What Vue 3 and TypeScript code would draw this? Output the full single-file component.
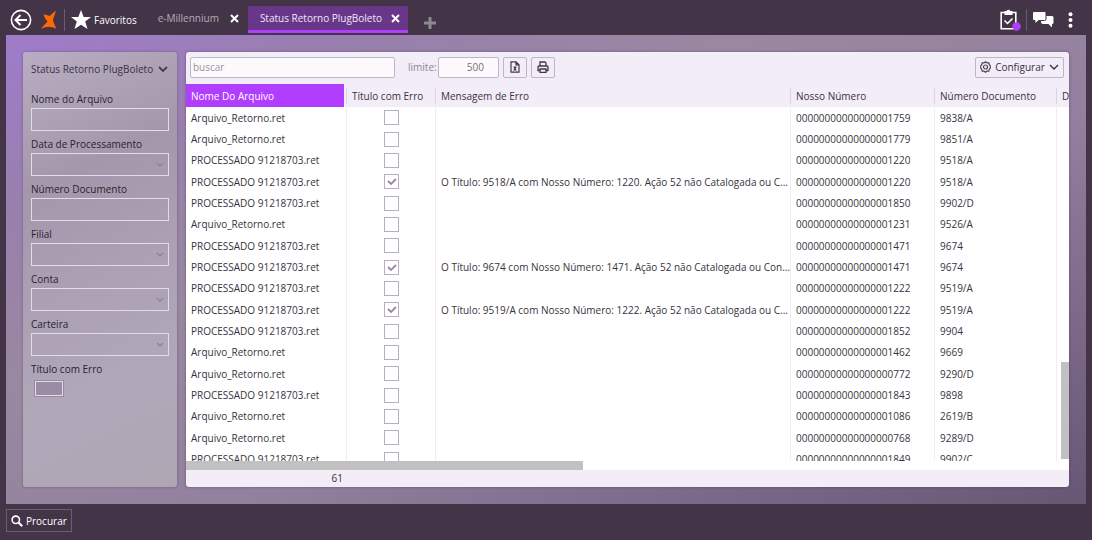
<script setup lang="ts">
import { ref } from 'vue'

interface Field { id: string; label: string; kind: 'text' | 'select' }
interface Row { file: string; error: boolean; message: string; ours: string; doc: string }

const fields: Field[] = [
  { id: 'arquivo', label: 'Nome do Arquivo', kind: 'text' },
  { id: 'data', label: 'Data de Processamento', kind: 'select' },
  { id: 'documento', label: 'Número Documento', kind: 'text' },
  { id: 'filial', label: 'Filial', kind: 'select' },
  { id: 'conta', label: 'Conta', kind: 'select' },
  { id: 'carteira', label: 'Carteira', kind: 'select' },
]

const A = 'Arquivo_Retorno.ret'
const P = 'PROCESSADO 91218703.ret'
const source: [string, string, string, string?][] = [
  [A, '1759', '9838/A'],
  [A, '1779', '9851/A'],
  [P, '1220', '9518/A'],
  [P, '1220', '9518/A', 'O Título: 9518/A com Nosso Número: 1220. Ação 52 não Catalogada ou C...'],
  [P, '1850', '9902/D'],
  [A, '1231', '9526/A'],
  [P, '1471', '9674'],
  [P, '1471', '9674', 'O Título: 9674 com Nosso Número: 1471. Ação 52 não Catalogada ou Con...'],
  [P, '1222', '9519/A'],
  [P, '1222', '9519/A', 'O Título: 9519/A com Nosso Número: 1222. Ação 52 não Catalogada ou C...'],
  [P, '1852', '9904'],
  [A, '1462', '9669'],
  [A, '0772', '9290/D'],
  [P, '1843', '9898'],
  [A, '1086', '2619/B'],
  [A, '0768', '9289/D'],
  [P, '1849', '9902/C'],
]
const rows = ref<Row[]>(source.map(([file, n, doc, message]) => ({
  file, doc, message: message ?? '', error: !!message, ours: n.padStart(20, '0'),
})))
const search = ref('')
const limit = ref('500')
</script>

<template>
  <div class="app">
    <header class="topbar">
      <button class="icon-btn back" aria-label="Voltar">
        <svg width="22" height="22" viewBox="0 0 22 22" fill="none" stroke="#fff">
          <circle cx="11" cy="11" r="9.6" stroke-width="1.6" />
          <path d="M17 11H6M10.5 6 5.5 11l5 5" stroke-width="2" />
        </svg>
      </button>
      <svg class="brand" width="18" height="20" viewBox="0 0 18 20" fill="#ff6a00">
        <path d="M3.500 4.500Q7 4.500 9.500 6L16 .5 12.800 10.500 16.300 18.800Q12.500 16.800 9 16.800T.8 18.800L7.500 11.500Q4.500 8.500 3.500 4.500Z" />
      </svg>
      <button class="favorites">
        <svg width="20" height="20" viewBox="0 0 20 20" fill="#fff">
          <path d="m10 0 2.700 7H20l-5.800 4.500L16.500 19 10 14.700 3.500 19l2.300-7.500L0 7h7.300Z" />
        </svg>
        <span>Favoritos</span>
      </button>
      <nav class="tabs">
        <div class="tab">
          <a href="#millennium">e-Millennium</a>
          <button class="icon-btn" aria-label="Fechar e-Millennium">
            <svg width="9" height="9" viewBox="0 0 9 9" stroke="#fff" stroke-width="2"><path d="m1 1 7 7M8 1 1 8" /></svg>
          </button>
        </div>
        <div class="tab active">
          <a href="#status">Status Retorno PlugBoleto</a>
          <button class="icon-btn" aria-label="Fechar Status Retorno PlugBoleto">
            <svg width="9" height="9" viewBox="0 0 9 9" stroke="#fff" stroke-width="2"><path d="m1 1 7 7M8 1 1 8" /></svg>
          </button>
        </div>
        <button class="icon-btn add" aria-label="Nova aba">
          <svg width="12" height="12" viewBox="0 0 12 12" stroke="#8d8990" stroke-width="3"><path d="M6 0v12M0 6h12" /></svg>
        </button>
      </nav>
      <div class="actions">
        <button class="icon-btn" aria-label="Tarefas">
          <svg width="21" height="22" viewBox="0 0 21 22" fill="none">
            <path d="M1.200 3.500h14.600v16.300H1.200z" stroke="#fff" stroke-width="1.600" />
            <path d="M4.500 2h2.200a1.900 1.900 0 0 1 3.600 0h2.200v4h-8z" fill="#fff" />
            <path d="m4.500 11.500 3 3 5-5" stroke="#fff" stroke-width="1.500" />
            <circle cx="16.500" cy="17.500" r="4.200" fill="#b13dff" />
          </svg>
        </button>
        <button class="icon-btn chat" aria-label="Mensagens">
          <svg width="22" height="17" viewBox="0 0 22 17">
            <path d="M9 5h11q1.500 0 1.500 1.500v5Q21.500 13 20 13v3.500L16.500 13H11q-2 0-2-2Z" fill="#fff" />
            <path d="M2 .5h10.500Q14 .5 14 2v6q0 1.500-1.500 1.500h-6L3 13V9.500H2Q.5 9.500.5 8V2Q.5.500 2 .5Z" fill="#fff" stroke="#433547" />
          </svg>
        </button>
        <button class="icon-btn more" aria-label="Mais opções">
          <svg width="5" height="16" viewBox="0 0 5 16" fill="#fff"><circle cx="2.500" cy="2.200" r="2" /><circle cx="2.500" cy="8" r="2" /><circle cx="2.500" cy="13.800" r="2" /></svg>
        </button>
      </div>
    </header>

    <main class="workspace">
      <aside class="filters">
        <button class="filters-title">
          <span>Status Retorno PlugBoleto</span>
          <svg width="10" height="7" viewBox="0 0 10 7" fill="none" stroke="#443c48" stroke-width="1.800"><path d="m1 1 4 4 4-4" /></svg>
        </button>
        <div v-for="f in fields" :key="f.id" class="field">
          <label :for="f.id">{{ f.label }}</label>
          <input v-if="f.kind === 'text'" :id="f.id" type="text" class="box" />
          <div v-else class="select-wrap">
            <select :id="f.id" class="box"><option></option></select>
            <svg class="caret" width="8" height="6" viewBox="0 0 8 6" fill="none" stroke="#8e8792" stroke-width="1.500"><path d="m1 1 3 3 3-3" /></svg>
          </div>
        </div>
        <div class="field">
          <label for="erro">Título com Erro</label>
          <input id="erro" type="checkbox" class="toggle" />
        </div>
      </aside>

      <section class="panel">
        <div class="toolbar">
          <input v-model="search" class="search" type="text" placeholder="buscar" aria-label="buscar" />
          <label class="limit-label" for="limite">limite:</label>
          <input id="limite" v-model="limit" class="limit" type="text" />
          <button class="tool" aria-label="Exportar">
            <svg width="10" height="12" viewBox="0 0 10 12" fill="none" stroke="#40384a" stroke-width="1.200"><path d="M1 .8h5L9 3.800v7.400H1zM6 .8v3h3" /><path d="m3.800 5.500 2.400 4m0-4-2.400 4" stroke-width="1.300" /></svg>
          </button>
          <button class="tool" aria-label="Imprimir">
            <svg width="12" height="12" viewBox="0 0 12 12" fill="none" stroke="#40384a" stroke-width="1.300"><path d="M3 5V1h5l1 1v3M2.500 9.500H1V6q0-1 1-1h8q1 0 1 1v3.500H9.500M3 8h6v3.300H3z" /></svg>
          </button>
          <button class="configure">
            <svg width="11" height="12" viewBox="0 0 11 12" fill="none" stroke="#4d4554"><path d="m5.500.8 1.500 1 1.800.1.500 1.800 1 1.300v2l-1 1.300-.5 1.800-1.800.1-1.500 1-1.500-1-1.800-.1-.5-1.800-1-1.300V5l1-1.300.5-1.800L4 1.800Z" stroke-width="1.200" /><circle cx="5.500" cy="6" r="2" stroke-width="1.200" /></svg>
            <span>Configurar</span>
            <svg width="10" height="7" viewBox="0 0 10 7" fill="none" stroke="#40384a" stroke-width="1.500"><path d="m1 1 4 4 4-4" /></svg>
          </button>
        </div>

        <div class="grid-area">
          <table>
            <colgroup>
              <col class="c-file" /><col class="c-error" /><col class="c-message" /><col class="c-ours" /><col class="c-doc" /><col />
            </colgroup>
            <thead>
              <tr>
                <th class="sorted"><span>Nome Do Arquivo</span></th>
                <th><span>Título com Erro</span></th>
                <th><span>Mensagem de Erro</span></th>
                <th><span>Nosso Número</span></th>
                <th><span>Número Documento</span></th>
                <th><span>D</span></th>
              </tr>
            </thead>
            <tbody>
              <tr v-for="(r, i) in rows" :key="i">
                <td>{{ r.file }}</td>
                <td class="check-cell"><input v-model="r.error" type="checkbox" class="check" :aria-label="'Título com Erro, linha ' + (i + 1)" /></td>
                <td>{{ r.message }}</td>
                <td>{{ r.ours }}</td>
                <td>{{ r.doc }}</td>
                <td></td>
              </tr>
            </tbody>
          </table>
          <div class="v-thumb"></div>
        </div>
        <div class="h-track"><div class="h-thumb"></div></div>
        <footer class="summary"><span>61</span></footer>
      </section>
    </main>

    <footer class="bottombar">
      <button class="find">
        <svg width="12" height="12" viewBox="0 0 12 12" fill="none" stroke="#fff" stroke-width="1.600"><circle cx="4.800" cy="4.800" r="3.700" /><path d="m7.500 7.500 3.700 3.700" stroke-width="2" /></svg>
        <span>Procurar</span>
      </button>
    </footer>
  </div>
</template>

<style>
body { margin: 0; background: #fff; }
</style>

<style scoped>
* { box-sizing: border-box; }
.app {
  height: 100vh;
  display: flex;
  flex-direction: column;
  margin-right: 1px;
  background: #433547;
  color: #39323d;
  font: 10px/14px "Open Sans", "Noto Sans", sans-serif;
  overflow: hidden;
}
button, input, select { font: inherit; color: inherit; margin: 0; }
button { display: flex; align-items: center; padding: 0; border: 0; background: none; cursor: pointer; white-space: nowrap; }
svg { display: block; flex: none; }
a { color: inherit; text-decoration: none; }

.topbar { display: flex; align-items: center; height: 35px; flex: none; padding: 4px 19px 0 10px; color: #fff; }
.brand { margin-left: 8px; }
.favorites { height: 22px; margin-left: 6px; padding-left: 6px; gap: 3px; border-left: 1px solid #6a5e6e; }
.tabs { display: flex; align-self: stretch; align-items: flex-start; margin-left: 12px; padding-top: 2px; }
.tab { display: flex; align-items: center; height: 27px; gap: 11px; padding: 0 9px 3px; color: #b3acb6; }
.tab.active { background: #68378a; color: #efe6f5; border-bottom: 3px solid #b13dff; padding: 0 8px 0 12px; gap: 9px; }
.add { margin: 11px 0 0 16px; }
.actions { display: flex; align-items: center; margin-left: auto; }
.chat { height: 22px; margin-left: 5px; padding-left: 5px; border-left: 1px solid #6a5e6e; }
.more { margin-left: 14px; }

.workspace {
  flex: 1;
  min-height: 0;
  display: flex;
  gap: 9px;
  margin: 0 6px;
  padding: 17px;
  background: linear-gradient(155deg, #a07bcb 0%, #9880ad 18%, #9a88a0 36%, #93809f 60%, #7d6a8a 80%, #685675 100%);
}
.filters {
  flex: none;
  width: 154px;
  padding: 10px 8px;
  border-radius: 3px;
  background: linear-gradient(155deg, #b8adc3 0%, #a597ab 28%, #ada1b5 55%, #b0a8b9 75%, #aea6b2 100%);
  box-shadow: 0 0 3px rgba(60, 40, 80, 0.4);
}
.filters-title { gap: 5px; height: 14px; margin-bottom: 16px; color: #3b3340; }
.field { display: flex; flex-direction: column; height: 45px; color: #29232d; }
.field label { height: 16px; }
.box { width: 100%; height: 23px; border: 1px solid #e2dce8; background: transparent; border-radius: 0; padding: 0 4px; appearance: none; }
.select-wrap { position: relative; }
.caret { position: absolute; right: 5px; top: 9px; }
.toggle { appearance: none; width: 28px; height: 15px; margin: 3px 0 0 4px; background: #9b8ca6; border: 1px solid #e2dce8; box-shadow: 0 0 0 1px #9888a2; }

.panel { flex: 1; min-width: 0; display: flex; flex-direction: column; background: #f3edf8; border-radius: 3px; box-shadow: 0 0 3px rgba(60, 40, 80, 0.5); overflow: hidden; }
.toolbar { flex: none; display: flex; align-items: center; height: 32px; padding: 0 5px 2px 4px; }
.search, .limit, .tool, .configure { height: 21px; border: 1px solid #c0b3cc; border-radius: 2px; background: #fcfafd; }
.search { width: 205px; padding: 0 2px; }
.search::placeholder { color: #9b93a0; opacity: 1; }
.limit-label { width: 43px; padding-left: 13px; color: #8c8590; white-space: nowrap; }
.limit { width: 61px; padding: 0 14px; text-align: right; color: #77707c; }
.tool { width: 24px; margin-left: 4px; justify-content: center; background: #f3edf8; }
.configure { width: 89px; margin-left: auto; gap: 4px; justify-content: center; background: #f3edf8; }

.grid-area { position: relative; flex: 1; min-height: 0; overflow: hidden; background: #fff; }
table { width: 100%; height: 386px; table-layout: fixed; border-collapse: separate; border-spacing: 0; }
.c-file { width: 160px; }
.c-error { width: 89px; }
.c-message { width: 355px; }
.c-ours { width: 144px; }
.c-doc { width: 122px; }
th { height: 23px; padding: 0; background: #f3edf8; text-align: left; font-weight: 400; overflow: hidden; }
th span { display: block; height: 16px; padding-left: 5px; line-height: 16px; border-left: 1px solid #ddd3e5; white-space: nowrap; }
th.sorted { background: #b13dff linear-gradient(#f3edf8, #f3edf8) right / 2px 100% no-repeat; color: #fff; }
th.sorted span { border: 0; }
td { padding: 0 0 0 5px; border-left: 1px solid #f1eef3; white-space: nowrap; overflow: hidden; }
td:first-child { border: 0; }
td.check-cell { padding: 0 0 0 1px; }
.check { display: block; appearance: none; width: 15px; height: 15px; margin: 0 auto; border: 1px solid #b9adc4; background: #fff; }
.check:checked { background: url("data:image/svg+xml,%3Csvg xmlns='http://www.w3.org/2000/svg' viewBox='0 0 13 13'%3E%3Cpath d='m3 6 3 3 5-5' fill='none' stroke='%239787a5' stroke-width='1.800'/%3E%3C/svg%3E") center / 13px no-repeat; }
.v-thumb { position: absolute; right: 0; bottom: 2px; width: 8px; height: 97px; background: #c1c1c1; }
.h-track { flex: none; height: 9px; background: #fff; }
.h-thumb { width: 45%; height: 9px; background: #c1c1c1; }
.summary { flex: none; height: 17px; line-height: 17px; }
.summary span { display: block; width: 157px; text-align: right; }

.bottombar { flex: none; height: 36px; padding: 5px 6px; }
.find { height: 23px; padding: 0 4px; gap: 3px; border: 1px solid #6b5d72; color: #fff; }
</style>
